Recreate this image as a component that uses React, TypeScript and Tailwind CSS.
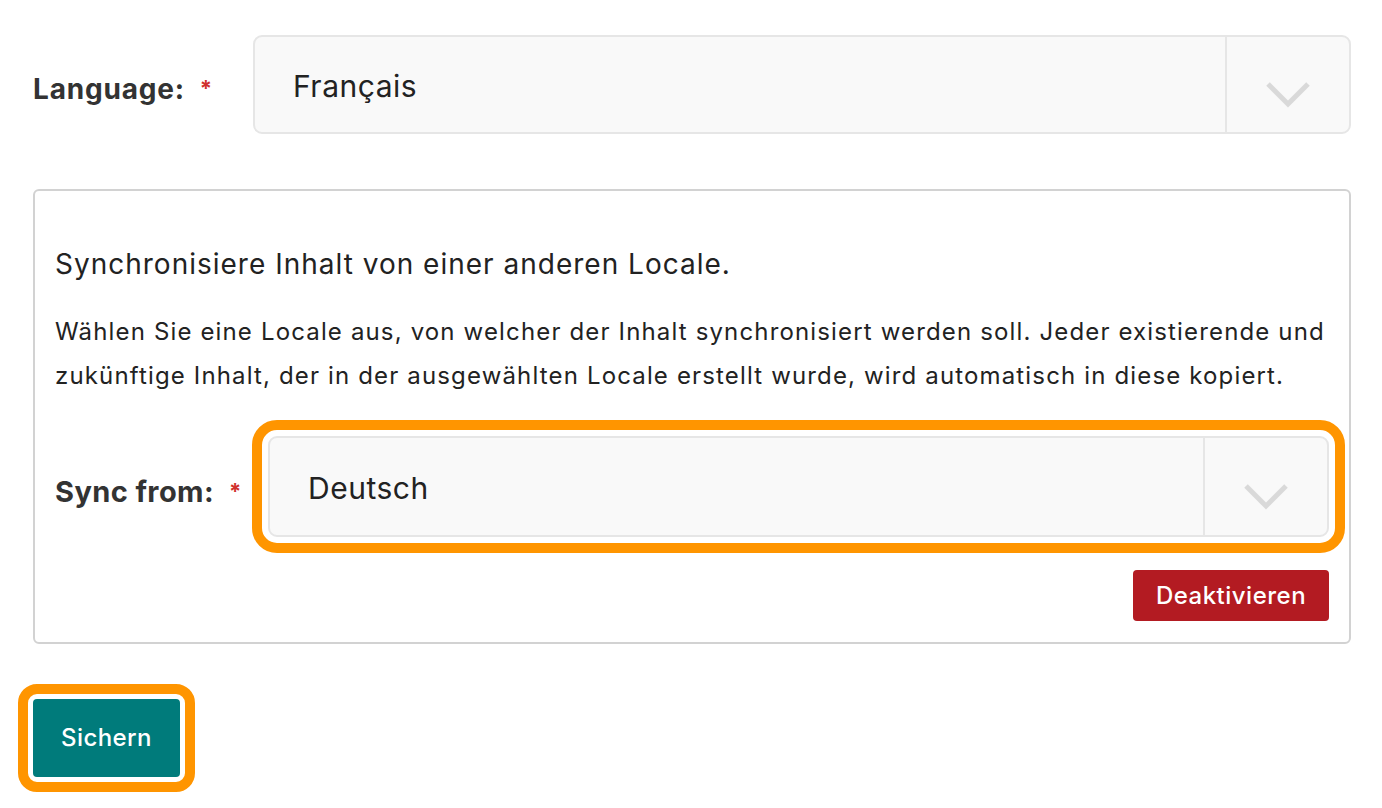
const Chevron = () => (
  <svg width="46" height="28" viewBox="0 0 46 28" fill="none">
    <path d="M3 3l20 20L43 3" stroke="#d9d9d9" strokeWidth="5" />
  </svg>
)

const Select = ({ value, ring = false }: { value: string; ring?: boolean }) => (
  <div
    className={`flex flex-1 rounded-[9px] border-2 border-[#e6e6e6] bg-[#f9f9f9] ${
      ring ? 'h-[101px] outline-[10px] outline-offset-[6px] outline-solid outline-[#ff9500]' : 'h-[99px]'
    }`}
  >
    <div className="flex flex-1 items-center pl-[38px] pt-[4px] text-[30px] tracking-[0.5px] text-[#222]">{value}</div>
    <div className="flex w-[124px] items-center justify-center border-l-2 border-[#e6e6e6] pt-[20px]">
      <Chevron />
    </div>
  </div>
)

const Required = () => <span className="ml-[15px] text-[22px] font-bold text-[#d0312d]">*</span>

const App = () => {
  return (
    <div className="h-[808px] w-full bg-white pl-[33px] pr-[31px] pt-[35px] font-['Inter',sans-serif] text-[#222]">
      <div className="flex items-center">
        <label className="flex w-[220px] items-center pt-[8px] text-[28px] font-bold tracking-[0.8px] text-[#333]">
          Language:
          <Required />
        </label>
        <Select value="Français" />
      </div>

      <div className="mt-[55px] rounded-md border-2 border-[#d2d2d2] px-[20px] pb-[21px] pt-[53px]">
        <h3 className="text-[28px] leading-[40px] tracking-[1px]">Synchronisiere Inhalt von einer anderen Locale.</h3>
        <p className="mt-[26px] whitespace-nowrap text-[24px] leading-[44px] tracking-[1.15px]">
          Wählen Sie eine Locale aus, von welcher der Inhalt synchronisiert werden soll. Jeder existierende und
          <br />
          zukünftige Inhalt, der in der ausgewählten Locale erstellt wurde, wird automatisch in diese kopiert.
        </p>
        <div className="mt-[38px] flex items-center">
          <label className="flex w-[213px] items-center pt-[10px] text-[29px] font-bold tracking-[0.4px] text-[#333]">
            Sync from:
            <Required />
          </label>
          <Select value="Deutsch" ring />
        </div>
        <div className="mt-[33px] flex justify-end">
          <button className="h-[51px] w-[196px] rounded-[4px] bg-[#b31b22] text-[24px] font-medium tracking-[0.5px] text-white">
            Deaktivieren
          </button>
        </div>
      </div>

      <button className="mt-[55px] h-[78px] w-[147px] rounded-[4px] bg-[#007b7b] text-[24px] font-medium tracking-[0.4px] text-white outline-[10px] outline-offset-[5px] outline-solid outline-[#ff9500]">
        Sichern
      </button>
    </div>
  )
}

export default App
